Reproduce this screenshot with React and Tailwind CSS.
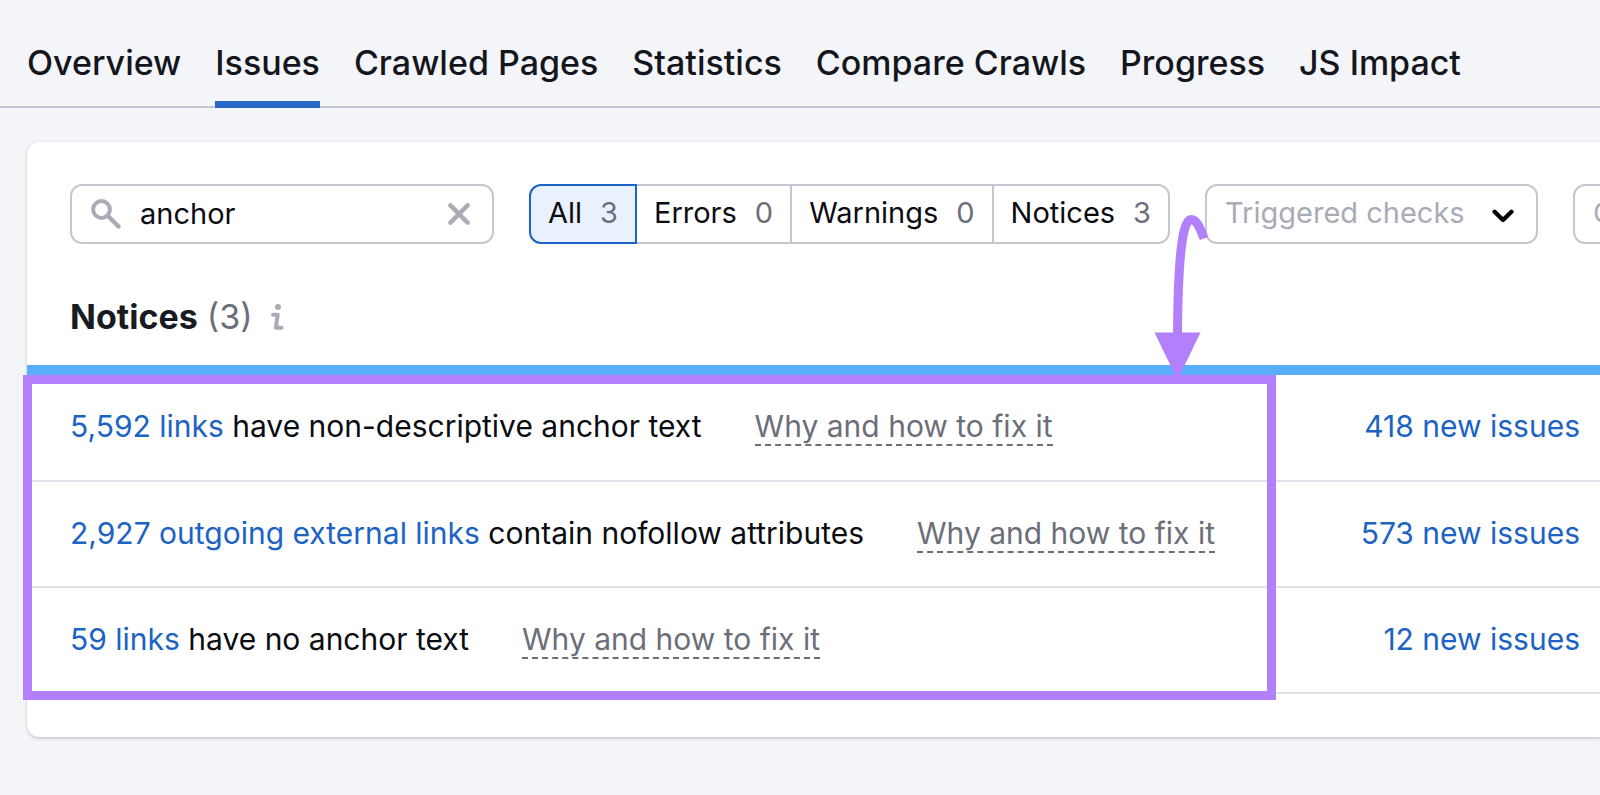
import { useState } from "react";

const tabs = [
    "Overview",
    "Issues",
    "Crawled Pages",
    "Statistics",
    "Compare Crawls",
    "Progress",
    "JS Impact",
];

const filters = [
    { name: "All", count: 3 },
    { name: "Errors", count: 0 },
    { name: "Warnings", count: 0 },
    { name: "Notices", count: 3 },
];

const issues = [
    { link: "5,592 links", text: "have non-descriptive anchor text", fresh: 418 },
    { link: "2,927 outgoing external links", text: "contain nofollow attributes", fresh: 573 },
    { link: "59 links", text: "have no anchor text", fresh: 12 },
];

const SearchIcon = () => (
    <svg viewBox="0 0 30 30" className="size-[30px] shrink-0 text-[#a9abb6]" fill="none" stroke="currentColor" aria-hidden="true">
        <circle cx="10.5" cy="10.5" r="8.4" strokeWidth="4" />
        <path d="M17 17l10.5 10.5" strokeWidth="4.4" strokeLinecap="round" />
    </svg>
);

const CloseIcon = () => (
    <svg viewBox="0 0 22 22" className="size-[22px]" fill="none" stroke="currentColor" strokeWidth="4.4" strokeLinecap="round" aria-hidden="true">
        <path d="M2.4 2.4l17.2 17.2M19.6 2.4L2.4 19.6" />
    </svg>
);

const ChevronIcon = () => (
    <svg viewBox="0 0 22 14" className="w-[22px] h-[14px]" fill="none" stroke="currentColor" strokeWidth="4.4" strokeLinecap="round" strokeLinejoin="round" aria-hidden="true">
        <path d="M2.6 2.8L11 11l8.4-8.2" />
    </svg>
);

const InfoIcon = () => (
    <svg viewBox="0 0 13 26" className="w-[13px] h-[26px]" fill="none" stroke="currentColor" aria-hidden="true">
        <circle cx="7" cy="3" r="3" fill="currentColor" stroke="none" />
        <path d="M2 10.8h4.7L4.8 23.7h5.7" strokeWidth="4" strokeLinecap="round" strokeLinejoin="round" />
    </svg>
);

const SelectBox = ({ label, className }) => (
    <div className={`relative shrink-0 ${className}`}>
        <select
            aria-label={label}
            className="appearance-none w-full h-[60px] pl-[18px] pb-[2px] rounded-xl border-2 border-[#c4c7cf] bg-white text-[#a9abb6]"
        >
            <option>{label}</option>
        </select>
        <span className="absolute inset-y-0 right-6 flex items-center pt-1 text-black pointer-events-none">
            <ChevronIcon />
        </span>
    </div>
);

// Frame round the issues column, with the arrow that points at it
const Highlight = () => (
    <div className="absolute -left-1 right-[324px] top-0 -bottom-1.5 border-[9px] border-[#b180fa] pointer-events-none">
        <svg
            viewBox="0 0 60 170"
            className="absolute right-[55px] -top-[172px] w-[60px] h-[170px]"
            fill="none"
            aria-hidden="true"
        >
            <path d="M25.5 126C25.8 60 29 7.500 39 7.500C45 7.500 48 16 52 26.500" stroke="#b180fa" strokeWidth="9" />
            <path d="M2.500 120.500h46L25.500 168z" fill="#b180fa" />
        </svg>
    </div>
);

const App = () => {
    const [query, setQuery] = useState("anchor");
    const [activeFilter, setActiveFilter] = useState("All");

    return (
        <div className="min-h-screen overflow-hidden bg-[#f4f5f9] font-['Inter',sans-serif] text-[30px] text-[#0b0c12]">
            <nav className="flex gap-[34px] h-[108px] px-[27px] border-b-2 border-[#c4c7cf] whitespace-nowrap">
                {tabs.map((tab) => (
                    <a
                        key={tab}
                        href="#"
                        className={`h-[108px] pt-[42px] text-[34px] leading-[42px] font-medium text-[#14161e] ${
                            tab === "Issues" ? "border-b-[7px] border-[#2a68c8]" : ""
                        }`}
                    >
                        {tab}
                    </a>
                ))}
            </nav>

            <main className="mt-[34px] ml-[27px] pb-[43px] rounded-l-xl bg-white shadow-[0_0_2px_rgba(25,27,35,0.16),0_2px_3px_rgba(25,27,35,0.14)]">
                <div className="flex gap-[35px] pt-[42px] pl-[43px] overflow-hidden text-[29px] whitespace-nowrap">
                    <div className="flex items-center shrink-0 w-[424px] h-[60px] pl-[19px] pr-[22px] rounded-xl border-2 border-[#c4c7cf]">
                        <SearchIcon />
                        <input
                            aria-label="Search issues"
                            value={query}
                            onChange={(e) => setQuery(e.target.value)}
                            className="flex-1 min-w-0 pl-[19px] outline-none"
                        />
                        <button aria-label="Clear search" className="text-[#a9abb6]" onClick={() => setQuery("")}>
                            <CloseIcon />
                        </button>
                    </div>

                    <div className="flex shrink-0">
                        {filters.map(({ name, count }) => (
                            <button
                                key={name}
                                onClick={() => setActiveFilter(name)}
                                className={`flex items-center gap-[18px] h-[60px] px-[17px] pb-[2px] -ml-[2px] first:ml-0 border-2 first:rounded-l-xl last:rounded-r-xl ${
                                    activeFilter === name
                                        ? "relative border-[#1c63c4] bg-[#e9f1ff]"
                                        : "border-[#c4c7cf] bg-white"
                                }`}
                            >
                                {name}
                                <span className="text-[#6c6e79]">{count}</span>
                            </button>
                        ))}
                    </div>

                    <SelectBox label="Triggered checks" className="w-[333px]" />
                    <SelectBox label="Category" className="w-[240px]" />
                </div>

                <div className="flex items-center pt-[51px] pb-[27px] pl-[43px] text-[34px] leading-[43px]">
                    <h2 className="font-bold text-[#191b23]">Notices</h2>
                    <span className="ml-[9px] text-[#6c6e79]">(3)</span>
                    <button aria-label="About notices" className="ml-[18px] text-[#a9abb6]">
                        <InfoIcon />
                    </button>
                </div>

                <div className="h-[10px] bg-[#58aef8]" />

                <div className="relative">
                    <table className="w-full whitespace-nowrap">
                        <tbody>
                            {issues.map((issue) => (
                                <tr key={issue.link} className="h-[106px] border-b-2 border-[#e0e1e9]">
                                    <td className="pl-[43px] pb-[2px]">
                                        <a href="#" className="text-[#1c63c4]">{issue.link}</a> {issue.text}
                                        <button className="ml-[53px] leading-9 border-b-2 border-dashed border-[#6c6e79] text-[#6c6e79]">
                                            Why and how to fix it
                                        </button>
                                    </td>
                                    <td className="pr-5 pb-[2px] text-right">
                                        <a href="#" className="text-[#1c63c4]">{issue.fresh} new issues</a>
                                    </td>
                                </tr>
                            ))}
                        </tbody>
                    </table>
                    <Highlight />
                </div>
            </main>
        </div>
    );
};

export default App;
